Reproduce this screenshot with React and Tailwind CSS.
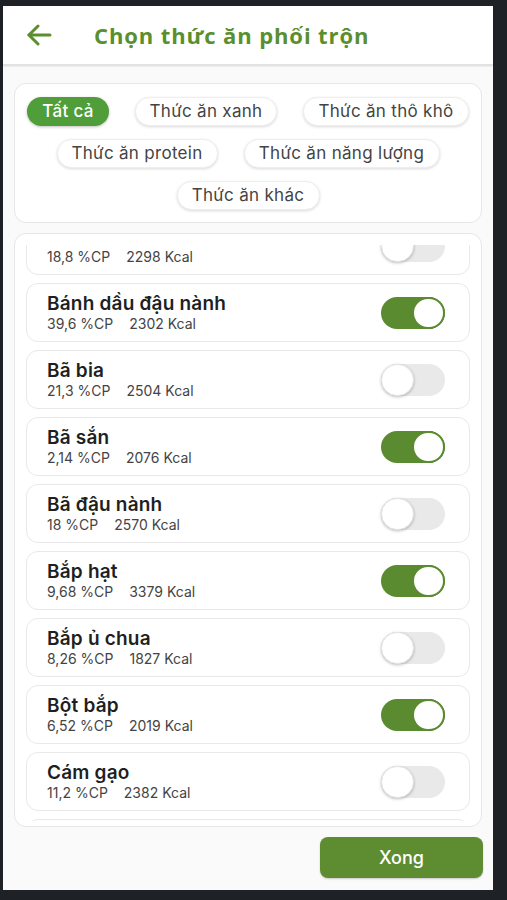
import { useState } from 'react';

const filters = [
  ['Tất cả', 'w-[82px]'],
  ['Thức ăn xanh', 'w-[142px]'],
  ['Thức ăn thô khô', 'w-[166px]'],
  ['Thức ăn protein', 'w-[161px]'],
  ['Thức ăn năng lượng', 'w-[196px]'],
  ['Thức ăn khác', 'w-[143px]'],
];

const initialFeeds = [
  { name: 'Bã men', cp: '18,8', kcal: 2298, on: false },
  { name: 'Bánh dầu đậu nành', cp: '39,6', kcal: 2302, on: true },
  { name: 'Bã bia', cp: '21,3', kcal: 2504, on: false },
  { name: 'Bã sắn', cp: '2,14', kcal: 2076, on: true },
  { name: 'Bã đậu nành', cp: '18', kcal: 2570, on: false },
  { name: 'Bắp hạt', cp: '9,68', kcal: 3379, on: true },
  { name: 'Bắp ủ chua', cp: '8,26', kcal: 1827, on: false },
  { name: 'Bột bắp', cp: '6,52', kcal: 2019, on: true },
  { name: 'Cám gạo', cp: '11,2', kcal: 2382, on: false },
  { name: 'Cám mì', cp: '15,1', kcal: 2250, on: false },
];

function Toggle({ on, onClick }) {
  return (
    <button
      onClick={onClick}
      className={`relative w-[64px] h-[32px] rounded-full shrink-0 ${on ? 'bg-[#5b8b30]' : 'bg-[#e9e9e9]'}`}
    >
      <span
        className={`absolute top-0 w-[33px] h-[32px] rounded-full bg-white ${
          on ? 'right-0 border-2 border-[#5b8b30]' : 'left-0 shadow-[0_1px_3px_rgba(0,0,0,0.25)] border border-[#e4e4e4]'
        }`}
      />
    </button>
  );
}

export default function App() {
  const [active, setActive] = useState(0);
  const [feeds, setFeeds] = useState(initialFeeds);

  const toggle = (i) => {
    setFeeds(feeds.map((f, idx) => (idx === i ? { ...f, on: !f.on } : f)));
  };

  return (
    <div className="w-[507px] h-[900px] bg-[#1e2227] pt-[6px] pl-[3px] overflow-hidden" style={{ fontFamily: 'Inter, "Noto Sans", sans-serif' }}>
      <div className="w-[490px] h-[884px] bg-[#fafafa] flex flex-col">
        {/* header */}
        <div className="h-[59px] bg-white flex items-center shadow-[0_1px_2px_rgba(0,0,0,0.15)] border-b border-[#e2e2e2] shrink-0">
          <button className="ml-[22px] w-[28px] h-[28px] flex items-center justify-center text-[#5a8f2e]">
            <svg width="26" height="22" viewBox="0 0 26 22" fill="none" stroke="currentColor" strokeWidth="3" strokeLinecap="round" strokeLinejoin="round">
              <path d="M24 11H3" />
              <path d="M12 2L3 11l9 9" />
            </svg>
          </button>
          <h1 className="ml-[41px] text-[22px] font-bold text-[#5a8f2e] tracking-[0.9px]" style={{ fontFamily: '"Open Sans", sans-serif' }}>
            Chọn thức ăn phối trộn
          </h1>
        </div>

        {/* filters */}
        <div className="mt-[18px] mx-[11px] h-[140px] bg-white rounded-xl border border-[#e6e6e6] px-[12px] pt-[13px] flex flex-wrap justify-center content-start gap-x-[26px] gap-y-[13px]">
          {filters.map(([label, w], i) => (
            <button
              key={label}
              onClick={() => setActive(i)}
              className={`${w} h-[29px] rounded-full text-[17px] tracking-[0.3px] ${
                active === i
                  ? 'bg-[#4f9e3a] text-white font-medium shadow-[0_1px_3px_rgba(0,0,0,0.25)]'
                  : 'bg-white text-[#444] border border-[#eee] shadow-[0_1px_3px_rgba(0,0,0,0.15)]'
              }`}
            >
              {label}
            </button>
          ))}
        </div>

        {/* feed list */}
        <div className="mt-[10px] mx-[11px] h-[594px] bg-white rounded-xl border border-[#e6e6e6] px-[11px] pt-[11px] pb-[5px] shrink-0">
          <div className="h-full overflow-hidden">
            <div className="-mt-[29px] flex flex-col gap-[8px]">
              {feeds.map((f, i) => (
                <div key={f.name} className="h-[59px] shrink-0 rounded-xl border border-[#e8e8e8] bg-white flex items-center pl-[20px] pr-[24px]">
                  <div className="flex-1 min-w-0">
                    <div className="text-[19px] leading-[22px] font-semibold text-[#1f1f1f] tracking-[0.2px]">{f.name}</div>
                    <div className="text-[14px] leading-[17px] text-[#444]">
                      {f.cp} %CP<span className="ml-[16px]">{f.kcal} Kcal</span>
                    </div>
                  </div>
                  <Toggle on={f.on} onClick={() => toggle(i)} />
                </div>
              ))}
            </div>
          </div>
        </div>

        {/* footer */}
        <div className="flex justify-end mt-[10px] pr-[10px]">
          <button className="w-[163px] h-[41px] rounded-lg bg-[#5e8c31] text-white text-[18px] font-medium shadow-[0_1px_2px_rgba(0,0,0,0.2)]">
            Xong
          </button>
        </div>
      </div>
    </div>
  );
}
